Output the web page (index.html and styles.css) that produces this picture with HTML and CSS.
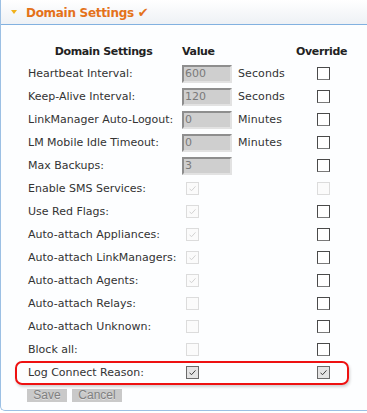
FILE: index.html
```html
<!DOCTYPE html>
<html>
<head>
<meta charset="utf-8">
<link rel="stylesheet" href="styles.css">
</head>
<body>
<div class="panel">
  <div class="panel-head">
    <span class="caret"></span>
    <span class="title">Domain Settings <span class="tick">✔</span></span>
  </div>
  <div class="panel-body">
    <div class="row head">
      <div class="th th-label">Domain Settings</div>
      <div class="th th-value">Value</div>
      <div></div>
      <div class="th th-override">Override</div>
    </div>

    <div class="row"><div class="label">Heartbeat Interval:</div><div><span class="field">600</span></div><div class="unit">Seconds</div><div class="ov"><span class="cb"></span></div></div>
    <div class="row"><div class="label">Keep-Alive Interval:</div><div><span class="field">120</span></div><div class="unit">Seconds</div><div class="ov"><span class="cb"></span></div></div>
    <div class="row"><div class="label">LinkManager Auto-Logout:</div><div><span class="field">0</span></div><div class="unit">Minutes</div><div class="ov"><span class="cb"></span></div></div>
    <div class="row"><div class="label">LM Mobile Idle Timeout:</div><div><span class="field">0</span></div><div class="unit">Minutes</div><div class="ov"><span class="cb"></span></div></div>
    <div class="row"><div class="label">Max Backups:</div><div><span class="field">3</span></div><div class="unit"></div><div class="ov"><span class="cb"></span></div></div>

    <div class="row"><div class="label">Enable SMS Services:</div><div><span class="cb dis"><svg viewBox="0 0 13 13"><path d="M3 7 L5.5 9 L10 4"/></svg></span></div><div></div><div class="ov"><span class="cb dis"></span></div></div>
    <div class="row"><div class="label">Use Red Flags:</div><div><span class="cb dis"><svg viewBox="0 0 13 13"><path d="M3 7 L5.5 9 L10 4"/></svg></span></div><div></div><div class="ov"><span class="cb"></span></div></div>
    <div class="row"><div class="label">Auto-attach Appliances:</div><div><span class="cb dis"><svg viewBox="0 0 13 13"><path d="M3 7 L5.5 9 L10 4"/></svg></span></div><div></div><div class="ov"><span class="cb"></span></div></div>
    <div class="row"><div class="label">Auto-attach LinkManagers:</div><div><span class="cb dis"><svg viewBox="0 0 13 13"><path d="M3 7 L5.5 9 L10 4"/></svg></span></div><div></div><div class="ov"><span class="cb"></span></div></div>
    <div class="row"><div class="label">Auto-attach Agents:</div><div><span class="cb dis"><svg viewBox="0 0 13 13"><path d="M3 7 L5.5 9 L10 4"/></svg></span></div><div></div><div class="ov"><span class="cb"></span></div></div>
    <div class="row"><div class="label">Auto-attach Relays:</div><div><span class="cb dis"></span></div><div></div><div class="ov"><span class="cb"></span></div></div>
    <div class="row"><div class="label">Auto-attach Unknown:</div><div><span class="cb dis"></span></div><div></div><div class="ov"><span class="cb"></span></div></div>
    <div class="row"><div class="label">Block all:</div><div><span class="cb dis"></span></div><div></div><div class="ov"><span class="cb"></span></div></div>
    <div class="row highlight"><div class="label">Log Connect Reason:</div><div><span class="cb on"><svg viewBox="0 0 13 13"><path d="M3 7 L5.5 9 L10 4"/></svg></span></div><div></div><div class="ov"><span class="cb on"><svg viewBox="0 0 13 13"><path d="M3 7 L5.5 9 L10 4"/></svg></span></div></div>

    <div class="buttons">
      <span class="btn save">Save</span>
      <span class="btn cancel">Cancel</span>
    </div>
  </div>
</div>
</body>
</html>
```
FILE: styles.css
```css
html, body {
  margin: 0;
  padding: 0;
  background: #ffffff;
}
body {
  font-family: "DejaVu Sans", Verdana, sans-serif;
  font-size: 11px;
  color: #333;
  width: 367px;
  height: 413px;
  overflow: hidden;
}
.panel {
  border-left: 1px solid #9cc0e4;
  border-bottom: 1px solid #9cc0e4;
  border-bottom-left-radius: 5px;
  height: 410px;
  background: #fdfeff;
}
.panel-head {
  height: 24px;
  border-bottom: 1px solid #82b1e0;
  background: linear-gradient(#ffffff, #eef1f5);
  display: flex;
  align-items: center;
  padding-left: 10px;
}
.caret {
  width: 0;
  height: 0;
  border-left: 3px solid transparent;
  border-right: 3px solid transparent;
  border-top: 4px solid #f1b11b;
  margin-right: 9px;
}
.title {
  font-size: 12px;
  font-weight: bold;
  color: #e4721a;
  letter-spacing: -0.3px;
}
.tick {
  font-size: 13px;
  font-weight: bold;
}
.panel-body {
  padding-left: 27px;
  padding-top: 15px;
}
.row {
  display: grid;
  grid-template-columns: 154px 56px 58px 54px;
  height: 23px;
  align-items: center;
  position: relative;
}
.row.head {
  height: 22px;
}
.th {
  font-weight: bold;
  color: #222;
  letter-spacing: -0.35px;
}
.th-label {
  text-align: center;
  padding-right: 3px;
}
.label {
  white-space: nowrap;
}
.field {
  display: block;
  box-sizing: border-box;
  width: 50px;
  height: 18px;
  background: #cfcfcf;
  border-top: 2px solid #8e8e8e;
  border-left: 2px solid #8e8e8e;
  border-bottom: 2px solid #e2e2e2;
  border-right: 2px solid #e2e2e2;
  color: #7a7a7a;
  padding-left: 1px;
  line-height: 14px;
  font-size: 11px;
}
.unit {
  letter-spacing: 0.1px;
}
.ov {
  padding-left: 21px;
  display: flex;
}
.cb {
  display: block;
  box-sizing: border-box;
  width: 13px;
  height: 13px;
  border: 1px solid #4a4a4a;
  border-bottom-color: #7a7a7a;
  background: #fff;
}
.row > div:nth-child(2) > .cb {
  margin-left: 4px;
}
.cb svg {
  display: block;
  width: 11px;
  height: 11px;
  fill: none;
  stroke-width: 1.1;
}
.cb.dis {
  border-color: #dcdcdc;
  background: #fbfbfb;
}
.cb.dis svg {
  stroke: #cfcfcf;
}
.cb.on {
  border-color: #6a6a6a;
  background: #e4e4e4;
}
.cb.on svg {
  stroke: #333;
}
.highlight::after {
  content: "";
  position: absolute;
  left: -13px;
  width: 330px;
  top: 0px;
  height: 20px;
  border: 2px solid #ee1111;
  border-radius: 7px;
  box-shadow: 1px 2px 3px rgba(0, 0, 0, 0.18);
  pointer-events: none;
}
.buttons {
  display: flex;
  gap: 5px;
  margin-top: 5px;
  margin-left: -1px;
}
.btn {
  display: block;
  height: 13px;
  background: #c9c9c9;
  color: #808080;
  font-family: "Liberation Sans", Arial, sans-serif;
  font-size: 12px;
  line-height: 13px;
  text-align: center;
  text-shadow: 0 1px 0 #e0e0e0;
}
.save { width: 40px; }
.cancel { width: 50px; }
```
